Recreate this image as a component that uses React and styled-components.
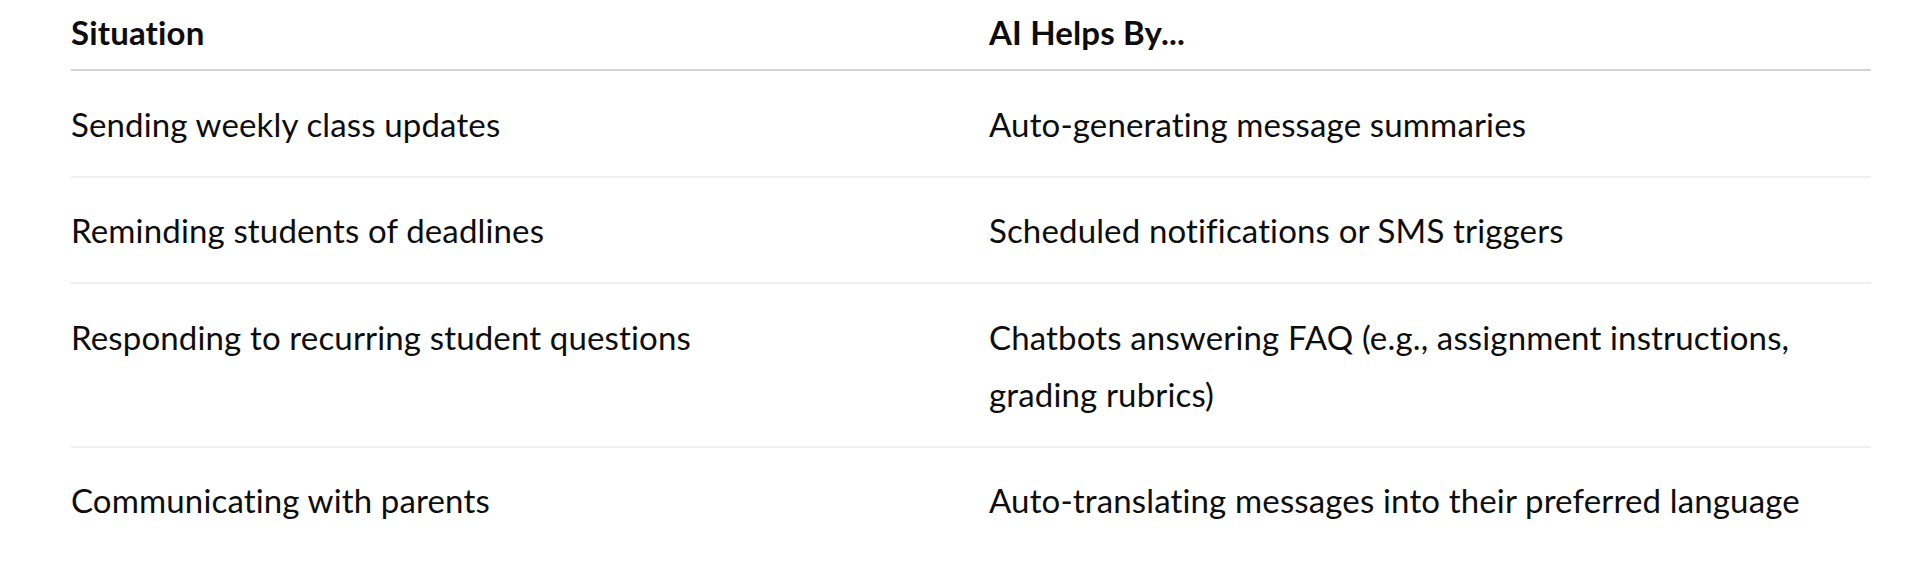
import React from "react";
import styled, { createGlobalStyle } from "styled-components";

const Global = createGlobalStyle`
  html, body { margin: 0; padding: 0; background: #ffffff; }
  body { font-family: Lato, "Open Sans", sans-serif; color: #0d0d0d; }
`;

const Page = styled.div`
  padding: 0 49px 0 71px;
  width: 1800px;
`;

const Table = styled.table`
  width: 1800px;
  border-collapse: collapse;
  table-layout: fixed;
  font-size: 33px;
  letter-spacing: 0.15px;
  line-height: 57px;
`;

const HeadCell = styled.th`
  text-align: left;
  font-weight: 700;
  padding: 4px 0 8px 0;
  border-bottom: 2px solid #d4d4d4;
  width: ${(p) => p.$w || "auto"};
`;

const Row = styled.tr`
  border-bottom: ${(p) => (p.$last ? "none" : "2px solid #efefef")};
`;

const Cell = styled.td`
  padding: 24.5px 0 23px 0;
  vertical-align: top;
`;

const rows = [
  ["Sending weekly class updates", "Auto-generating message summaries"],
  ["Reminding students of deadlines", "Scheduled notifications or SMS triggers"],
  [
    "Responding to recurring student questions",
    "Chatbots answering FAQ (e.g., assignment instructions, grading rubrics)",
  ],
  ["Communicating with parents", "Auto-translating messages into their preferred language"],
];

export default function App() {
  return (
    <>
      <Global />
      <Page>
        <Table>
          <thead>
            <tr>
              <HeadCell $w="918px">Situation</HeadCell>
              <HeadCell>AI Helps By...</HeadCell>
            </tr>
          </thead>
          <tbody>
            {rows.map((r, i) => (
              <Row key={i} $last={i === rows.length - 1}>
                <Cell>{r[0]}</Cell>
                <Cell>{r[1]}</Cell>
              </Row>
            ))}
          </tbody>
        </Table>
      </Page>
    </>
  );
}
